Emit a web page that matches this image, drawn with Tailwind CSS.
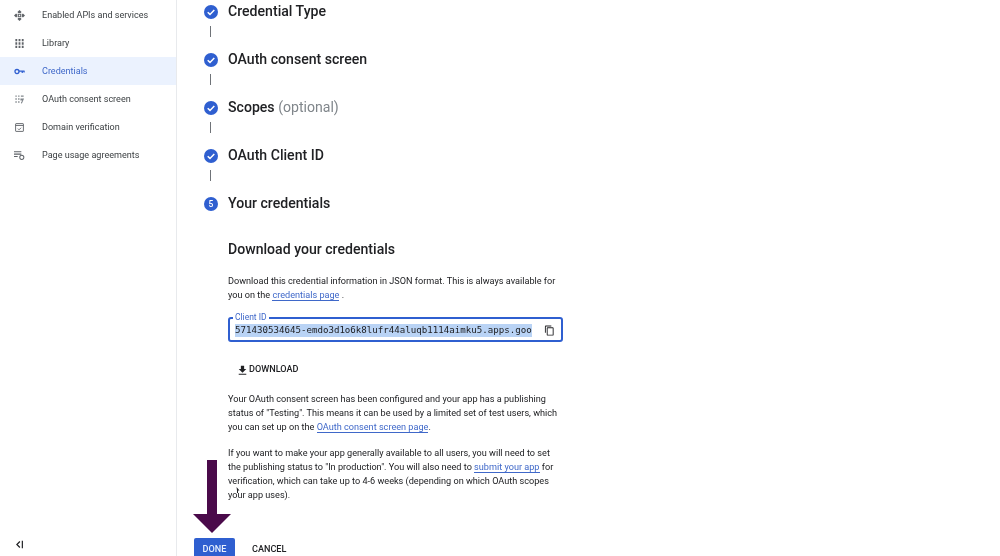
<!DOCTYPE html>
<html><head><meta charset="utf-8"><script src="https://cdn.jsdelivr.net/npm/@tailwindcss/browser@4"></script></head>
<body class="bg-white">
<div class="relative flex h-[556px] w-[1000px] overflow-hidden bg-white font-['Roboto',sans-serif] text-[#202124] blur-[0.35px]">
  <aside class="flex h-full w-[177px] shrink-0 flex-col justify-between border-r border-[#e8eaed] pt-[1px] pb-[7px] text-[9.05px] text-[#3c4043]">
    <nav class="flex flex-col">
      <a class="flex h-[28px] items-center gap-[17px] pl-[14px]"><svg class="size-[11px]" viewBox="0 0 24 24" fill="#5f6368"><path d="M12 0l4.5 4.5-2 2H9.5l-2-2zM12 24l4.5-4.5-2-2H9.5l-2 2zM0 12l4.5-4.5 2 2v5l-2 2zM24 12l-4.5-4.5-2 2v5l2 2z"/><path fill-rule="evenodd" d="M8 8h8v8H8zM10.5 10.5v3h3v-3z"/></svg><span class="pt-px">Enabled APIs and services</span></a>
      <a class="flex h-[28px] items-center gap-[17px] pl-[14px]"><svg class="size-[11px]" viewBox="0 0 24 24" fill="#5f6368"><path d="M3 2h4v5H3zM10 2h4v5h-4zM17 2h4v5h-4zM3 9.5h4v5H3zM10 9.5h4v5h-4zM17 9.5h4v5h-4zM3 17h4v5H3zM10 17h4v5h-4zM17 17h4v5h-4z"/></svg><span class="pt-px">Library</span></a>
      <a class="flex h-[28px] items-center gap-[17px] bg-[#ebf2fe] pl-[14px] text-[#3f68c9]"><svg class="size-[11px]" viewBox="0 0 24 24" fill="none" stroke="#2f5fd0" stroke-width="2.8"><circle cx="6.5" cy="12" r="4.4"/><path d="M10.5 11h12.5M18 11v4M22 11v3"/></svg><span class="pt-px">Credentials</span></a>
      <a class="flex h-[28px] items-center gap-[17px] pl-[14px]"><svg class="size-[11px]" viewBox="0 0 24 24" fill="#80868b"><path d="M3 3h3v3H3zM3 9.5h3v3H3zM3 16h3v3H3zM9 3h3v3H9zM15 3h6v3h-6zM9 9.5h3v3H9zM9 16h3v3H9zM14 10h8l-5 11-2-2 3-5h-4z"/></svg><span class="pt-px">OAuth consent screen</span></a>
      <a class="flex h-[28px] items-center gap-[17px] pl-[14px]"><svg class="size-[11px]" viewBox="0 0 24 24" fill="none" stroke="#5f6368" stroke-width="2"><rect x="3.5" y="3.5" width="17" height="17" rx="1"/><path d="M3.5 7.5h17" /><path d="M8.5 14.5l2.5 2.5 4.5-4.5"/></svg><span class="pt-px">Domain verification</span></a>
      <a class="flex h-[28px] items-center gap-[17px] pl-[14px]"><svg class="size-[11px]" viewBox="0 0 24 24" fill="none" stroke="#5f6368" stroke-width="2.2"><path d="M0 4h16M0 9h16M0 14h8"/><circle cx="17" cy="16" r="4.5"/></svg><span class="pt-px">Page usage agreements</span></a>
    </nav>
    <div class="pl-[15px]"><svg class="block size-[9px]" viewBox="0 0 12 12" fill="none" stroke="#202124" stroke-width="1.6"><path d="M6.5 2L2.5 6l4 4"/><path d="M9.8 1v10"/></svg></div>
  </aside>
  <main class="min-w-0 flex-1 pt-[1px] pl-[27px]">
    <div class="flex h-[48px] flex-col">
      <div class="flex h-[22px] items-center gap-[10px] text-[14.1px] font-medium"><svg class="size-[14px] shrink-0" viewBox="0 0 14 14"><circle cx="7" cy="7" r="7" fill="#2f5fd0"/><path d="M3.7 7.2l2.3 2.2 4.3-4.4" fill="none" stroke="#fff" stroke-width="1.5"/></svg>Credential Type</div>
      <div class="ml-[6px] mt-[3px] h-[11px] w-px bg-[#6f7378]"></div>
    </div>
    <div class="flex h-[48px] flex-col">
      <div class="flex h-[22px] items-center gap-[10px] text-[14.1px] font-medium"><svg class="size-[14px] shrink-0" viewBox="0 0 14 14"><circle cx="7" cy="7" r="7" fill="#2f5fd0"/><path d="M3.7 7.2l2.3 2.2 4.3-4.4" fill="none" stroke="#fff" stroke-width="1.5"/></svg>OAuth consent screen</div>
      <div class="ml-[6px] mt-[3px] h-[11px] w-px bg-[#6f7378]"></div>
    </div>
    <div class="flex h-[48px] flex-col">
      <div class="flex h-[22px] items-center gap-[10px] text-[14.1px] font-medium"><svg class="size-[14px] shrink-0" viewBox="0 0 14 14"><circle cx="7" cy="7" r="7" fill="#2f5fd0"/><path d="M3.7 7.2l2.3 2.2 4.3-4.4" fill="none" stroke="#fff" stroke-width="1.5"/></svg><span>Scopes <span class="font-normal text-[#80868b]">(optional)</span></span></div>
      <div class="ml-[6px] mt-[3px] h-[11px] w-px bg-[#6f7378]"></div>
    </div>
    <div class="flex h-[48px] flex-col">
      <div class="flex h-[22px] items-center gap-[10px] text-[14.1px] font-medium"><svg class="size-[14px] shrink-0" viewBox="0 0 14 14"><circle cx="7" cy="7" r="7" fill="#2f5fd0"/><path d="M3.7 7.2l2.3 2.2 4.3-4.4" fill="none" stroke="#fff" stroke-width="1.5"/></svg>OAuth Client ID</div>
      <div class="ml-[6px] mt-[3px] h-[11px] w-px bg-[#6f7378]"></div>
    </div>
    <div class="flex h-[22px] items-center gap-[10px] text-[14.1px] font-medium"><span class="flex size-[14px] shrink-0 items-center justify-center rounded-full bg-[#2f5fd0] text-[8.5px] text-white">5</span>Your credentials</div>
    <section class="ml-[24px] w-[335px] pt-[23px]">
      <h2 class="text-[14.1px] leading-[22px] font-medium">Download your credentials</h2>
      <p class="mt-[14px] text-[9.15px] leading-[14px]">Download this credential information in JSON format. This is always available for you on the <a class="border-b border-[#3f68c9] text-[#3f68c9]">credentials page</a> .</p>
      <div class="relative mt-[15px] flex h-[25px] items-center justify-between rounded-[3px] border-2 border-[#2f5fd0] pt-px pr-[6px] pl-[5px]">
        <span class="absolute -top-[7px] left-[3px] bg-white px-[2px] text-[8.5px] leading-[10px] text-[#3f68c9]">Client ID</span>
        <span class="bg-[#b9d3f5] font-['DejaVu_Sans_Mono',monospace] text-[9.15px] leading-[13px] whitespace-nowrap">571430534645-emdo3d1o6k8lufr44aluqb1114aimku5.apps.goo</span>
        <svg class="size-[11px]" viewBox="0 0 24 24" fill="#202124"><path d="M16 1H4a2 2 0 0 0-2 2v14h2V3h12zm3 4H8a2 2 0 0 0-2 2v14a2 2 0 0 0 2 2h11a2 2 0 0 0 2-2V7a2 2 0 0 0-2-2zm0 16H8V7h11z"/></svg>
      </div>
      <div class="mt-[17px] flex h-[22px] items-center pl-[8px] text-[9.1px] font-medium text-[#202124]"><svg class="size-[13px]" viewBox="0 0 24 24" fill="#202124"><path d="M19 9h-4V3H9v6H5l7 7zM5 18v2h14v-2z"/></svg>DOWNLOAD</div>
      <p class="mt-[11px] text-[9.15px] leading-[14px]">Your OAuth consent screen has been configured and your app has a publishing status of "Testing". This means it can be used by a limited set of test users, which you can set up on the <a class="border-b border-[#3f68c9] text-[#3f68c9]">OAuth consent screen page</a>.</p>
      <p class="mt-[12px] text-[9.15px] leading-[14px]">If you want to make your app generally available to all users, you will need to set the publishing status to "In production". You will also need to <a class="border-b border-[#3f68c9] text-[#3f68c9]">submit your app</a> for verification, which can take up to 4-6 weeks (depending on which OAuth scopes your app uses).</p>
    </section>
    <div class="-ml-[10px] mt-[36px] flex items-start gap-[17px] text-[9.1px] font-medium">
      <button class="h-[22px] w-[41px] rounded-[2px] bg-[#2f5fd0] pt-[2px] text-[#e8f0fe]">DONE</button>
      <button class="h-[22px] pt-[2px]">CANCEL</button>
    </div>
  </main>
  <svg class="absolute left-[193px] top-[460px] h-[73px] w-[38px]" viewBox="0 0 38 73" fill="#4a0a4a"><path d="M14 0h10v54h14L19 73 0 54h14z"/></svg>
  <svg class="absolute left-[236px] top-[487px] h-[6px] w-[4px]" viewBox="0 0 4 6" fill="#202124"><path d="M0.5 0L3.5 3.5 2 3.5 2 6 1 6 1 3.5z"/></svg>
</div>
</body></html>
